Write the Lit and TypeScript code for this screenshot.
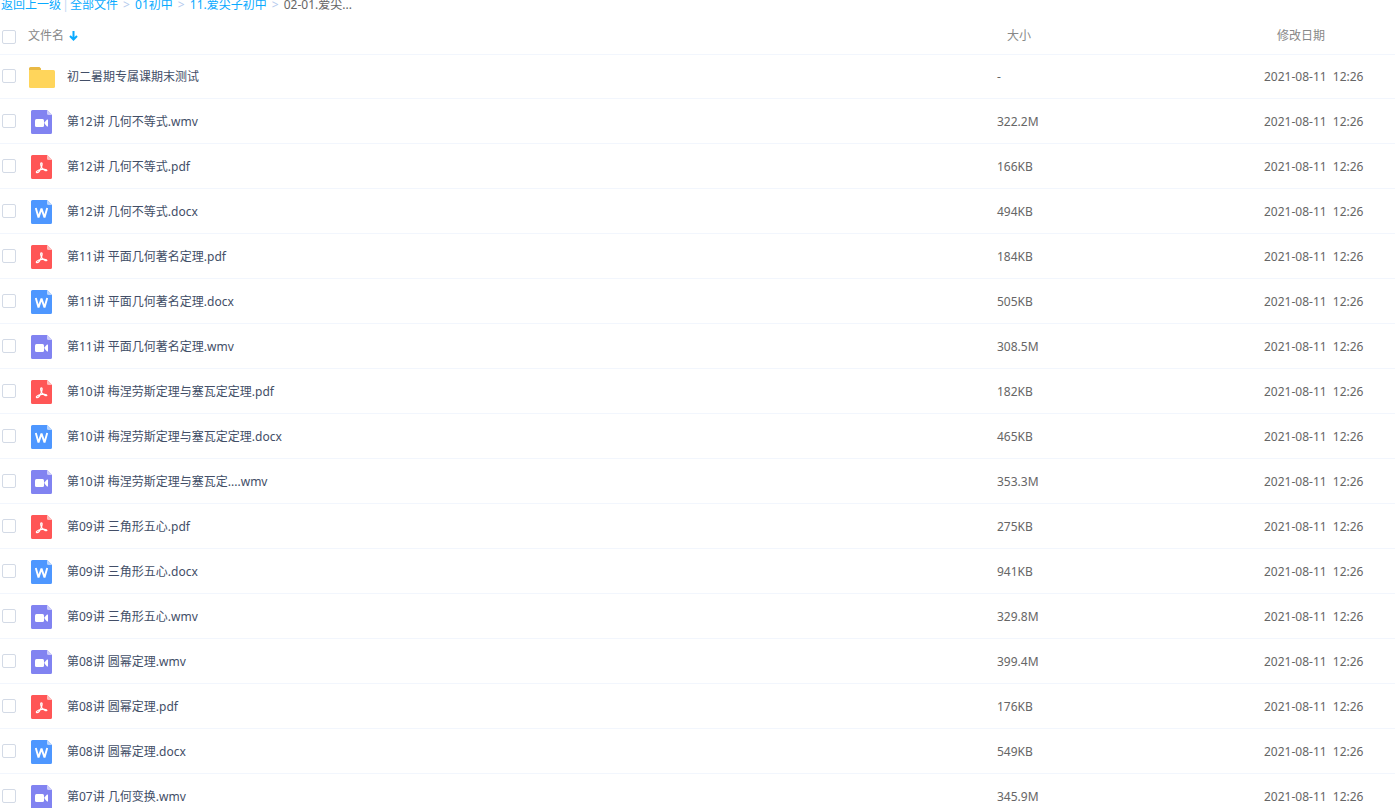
import { LitElement, html, css, svg } from "lit";
import { customElement, property } from "lit/decorators.js";

type Kind = "folder" | "wmv" | "pdf" | "docx";

interface Entry {
  kind: Kind;
  name: string;
  size: string;
}

const ENTRIES: Entry[] = [
  { kind: "folder", name: "初二暑期专属课期末测试", size: "-" },
  { kind: "wmv", name: "第12讲 几何不等式.wmv", size: "322.2M" },
  { kind: "pdf", name: "第12讲 几何不等式.pdf", size: "166KB" },
  { kind: "docx", name: "第12讲 几何不等式.docx", size: "494KB" },
  { kind: "pdf", name: "第11讲 平面几何著名定理.pdf", size: "184KB" },
  { kind: "docx", name: "第11讲 平面几何著名定理.docx", size: "505KB" },
  { kind: "wmv", name: "第11讲 平面几何著名定理.wmv", size: "308.5M" },
  { kind: "pdf", name: "第10讲 梅涅劳斯定理与塞瓦定定理.pdf", size: "182KB" },
  { kind: "docx", name: "第10讲 梅涅劳斯定理与塞瓦定定理.docx", size: "465KB" },
  { kind: "wmv", name: "第10讲 梅涅劳斯定理与塞瓦定....wmv", size: "353.3M" },
  { kind: "pdf", name: "第09讲 三角形五心.pdf", size: "275KB" },
  { kind: "docx", name: "第09讲 三角形五心.docx", size: "941KB" },
  { kind: "wmv", name: "第09讲 三角形五心.wmv", size: "329.8M" },
  { kind: "wmv", name: "第08讲 圆幂定理.wmv", size: "399.4M" },
  { kind: "pdf", name: "第08讲 圆幂定理.pdf", size: "176KB" },
  { kind: "docx", name: "第08讲 圆幂定理.docx", size: "549KB" },
  { kind: "wmv", name: "第07讲 几何变换.wmv", size: "345.9M" },
];

@customElement("file-icon")
export class FileIcon extends LitElement {
  @property() kind: Kind = "folder";

  static styles = css`
    :host {
      display: flex;
      justify-content: center;
      width: 26px;
    }
    .icon {
      display: block;
    }
  `;

  private page(fill: string, fold: string, mark: unknown) {
    return html`<svg class="icon" width="22" height="24" viewBox="0 0 22 24" aria-hidden="true">
      <path d="M1.500 0H16L21 5V22.500a1.500 1.500 0 0 1-1.500 1.500H1.500a1.500 1.500 0 0 1-1.500-1.500V1.500a1.500 1.500 0 0 1 1.500-1.500z" fill=${fill} />
      <path d="M16 0L21 5H17.500a1.500 1.500 0 0 1-1.500-1.500z" fill=${fold} />
      ${mark}
    </svg>`;
  }

  render() {
    switch (this.kind) {
      case "wmv":
        return this.page(
          "#8183f1",
          "#cdcdfa",
          svg`<rect x="4" y="9" width="9" height="8" rx="1.500" fill="#fff" />
              <path d="M13.600 12.200L16 9.600q1-.5 1 .4v6q0 .9-1 .4L13.600 13.800z" fill="#fff" />`
        );
      case "pdf":
        return this.page(
          "#ff5656",
          "#ffbcbc",
          svg`<path d="M10.200 7.800C11.600 7.600 11.200 10.200 10.400 12.200C9.300 14.900 7.100 18 5.700 17.600C4.500 17 6.500 15.300 9.200 14.700C12 14 15.800 14 15.900 15.200C15.800 16.500 12.500 15.200 11 13C9.800 11.200 9.100 8.100 10.200 7.800z"
              fill="none" stroke="#fff" stroke-width="1.200" stroke-linejoin="round" />`
        );
      case "docx":
        return this.page(
          "#4e97ff",
          "#b8d5ff",
          svg`<path d="M4.800 8L7.500 17.400L10.500 8.600L13.500 17.400L16.200 8" fill="none" stroke="#fff" stroke-width="1.900" stroke-linejoin="bevel" />`
        );
      default:
        return html`<svg class="icon" width="26" height="21" viewBox="0 0 26 21" aria-hidden="true">
          <path d="M1.500 0H10.500L12 1.500V8H0V1.500A1.500 1.500 0 0 1 1.500 0z" fill="#e9b944" />
          <path d="M0 3H24.500A1.500 1.500 0 0 1 26 4.500V19.500A1.500 1.500 0 0 1 24.500 21H1.500A1.500 1.500 0 0 1 0 19.500z" fill="#ffd55b" />
        </svg>`;
    }
  }
}

@customElement("app-root")
export class AppRoot extends LitElement {
  static styles = css`
    :host {
      display: block;
      height: 100vh;
      overflow: hidden;
      background: #fff;
      color: #666;
      font: 12px/18px "Noto Sans", "Noto Sans CJK SC", sans-serif;
    }
    .crumbs {
      display: flex;
      height: 18px;
      line-height: 10px;
      padding-left: 1px;
      white-space: nowrap;
    }
    .link {
      color: #09aaff;
      text-decoration: none;
    }
    .bar {
      width: 9px;
      text-align: center;
      color: #c4d8f4;
    }
    .sep {
      width: 17px;
      text-align: center;
      color: #b4cbee;
    }
    .files {
      width: 100%;
      table-layout: fixed;
      border-collapse: separate;
      border-spacing: 0;
    }
    .pick {
      width: 28px;
    }
    .size {
      width: 267px;
    }
    .date {
      width: 131px;
    }
    th,
    td {
      box-sizing: border-box;
      padding: 0;
      text-align: left;
      vertical-align: middle;
      font-weight: normal;
      white-space: nowrap;
    }
    th {
      height: 36px;
      color: #888;
      box-shadow: 0 1px #f2f6fd;
    }
    td {
      height: 45px;
      padding-top: 2px;
      border-bottom: 1px solid #f2f6fd;
    }
    .tick {
      padding-top: 0;
    }
    .all {
      padding-top: 2px;
    }
    .head-size {
      padding-left: 10px;
    }
    .head-date {
      padding-left: 13px;
    }
    .sort {
      display: flex;
      align-items: center;
      gap: 5px;
      padding: 0;
      border: 0;
      background: none;
      color: inherit;
      font: inherit;
    }
    .box {
      display: block;
      appearance: none;
      box-sizing: border-box;
      width: 14px;
      height: 14px;
      margin: 0 0 0 2px;
      border: 1px solid #d3dae6;
      border-radius: 2px;
      background: #fff;
    }
    .entry {
      display: flex;
      align-items: center;
      gap: 12px;
      padding-left: 1px;
    }
    .name {
      color: #424e67;
      text-decoration: none;
    }
    .clock {
      margin-left: 3px;
    }
  `;

  render() {
    return html`
      <nav class="crumbs" aria-label="路径">
        <a class="link" href="#up">返回上一级</a><span class="bar">|</span>
        <a class="link" href="#all">全部文件</a><span class="sep">&gt;</span>
        <a class="link" href="#01">01初中</a><span class="sep">&gt;</span>
        <a class="link" href="#11">11.爱尖子初中</a><span class="sep">&gt;</span>
        <span>02-01.爱尖...</span>
      </nav>
      <table class="files">
        <colgroup>
          <col class="pick" />
          <col />
          <col class="size" />
          <col class="date" />
        </colgroup>
        <thead>
          <tr>
            <th class="all"><input class="box" type="checkbox" aria-label="全选" /></th>
            <th>
              <button class="sort" type="button">
                文件名
                <svg width="9" height="10" viewBox="0 0 9 10" aria-hidden="true">
                  <path d="M4.500 0V8.500M1 5L4.500 8.500L8 5" fill="none" stroke="#09aaff" stroke-width="2" />
                </svg>
              </button>
            </th>
            <th class="head-size">大小</th>
            <th class="head-date">修改日期</th>
          </tr>
        </thead>
        <tbody>
          ${ENTRIES.map(
            (e) => html`<tr>
              <td class="tick"><input class="box" type="checkbox" aria-label=${e.name} /></td>
              <td>
                <div class="entry">
                  <file-icon .kind=${e.kind}></file-icon>
                  <a class="name" href="#file">${e.name}</a>
                </div>
              </td>
              <td>${e.size}</td>
              <td><time>2021-08-11 <span class="clock">12:26</span></time></td>
            </tr>`
          )}
        </tbody>
      </table>
    `;
  }
}
